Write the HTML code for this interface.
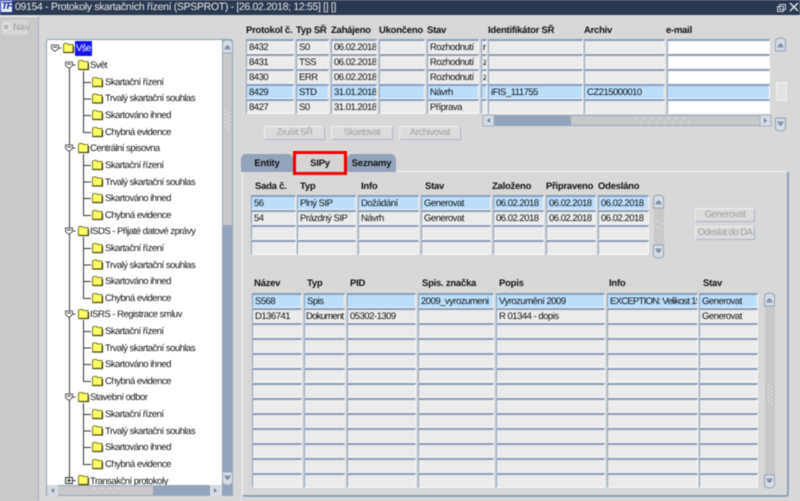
<!DOCTYPE html>
<html lang="cs"><head><meta charset="utf-8"><title>Protokoly skartačních řízení</title>
<style>
html,body{margin:0;padding:0}
body{width:800px;height:501px;position:relative;overflow:hidden;background:#d8d8d8;font:9.5px "Liberation Sans",sans-serif;color:#222;text-rendering:geometricPrecision;filter:blur(.45px)}
div,span{position:absolute;box-sizing:border-box;white-space:nowrap}
#title{left:0;top:0;width:800px;height:15px;background:#2a3950;color:#e8e8e8;font-size:10.5px;line-height:15px;padding-left:15px;letter-spacing:-.33px}
#logo{left:0;top:0;width:13px;height:13px;background:#e8ecfa;border:1px solid #2233aa;color:#1a2a9a;font:italic bold 10px/11px "Liberation Sans",sans-serif;text-align:center;letter-spacing:-1px}
#nav{left:0;top:16px;width:39px;height:485px;background:#c9c9c9;border-top:1px solid #eee;border-right:1px solid #a4b2c6}
#navb{left:2px;top:20px;width:26px;height:15px;background:#d6d6d6;color:#aaa;font-weight:bold;font-size:9.5px;line-height:15px;padding-left:11px;letter-spacing:-.2px}
#tree{left:46px;top:39px;width:187px;height:457px;background:#fff;border:1px solid #8fa0b8;border-radius:3px 3px 0 0}
.t{font-size:9.5px;line-height:12px;height:12px;color:#111;letter-spacing:-.5px;margin-top:1px}
.h{font-weight:bold;font-size:9.5px;line-height:13px;height:13px;color:#111;letter-spacing:-.25px}
.r{left:0;width:0;height:15px}
.c{top:0;height:15px;background:#ebebeb;border:1px solid #f6f6f6;border-top:2px solid #8b9db8;border-left:1px solid #8ea0ba;line-height:13px;padding-left:2px;overflow:hidden;font-size:9.5px;letter-spacing:-.5px;color:#111}
.s .c{background:#bbdefb}
.w{background:#fff}
.s .w{background:#bbdefb}
.a1{left:246px;width:48px}.a2{left:296px;width:33px}.a3{left:331px;width:46px}.a4{left:379px;width:46px}.a5{left:427px;width:52px}.a6{left:481px;width:6px;padding-left:1px}.a7{left:488px;width:95px}.a8{left:584px;width:81px}.a9{left:667px;width:103px}
.b1{left:251px;width:45px}.b2{left:297px;width:59px}.b3{left:358px;width:61px}.b4{left:421px;width:70px}.b5{left:493px;width:51px}.b6{left:546px;width:50px}.b7{left:598px;width:51px}
.d1{left:252px;width:50px}.d2{left:304px;width:41px}.d3{left:347px;width:69px}.d4{left:418px;width:76px}.d5{left:496px;width:109px}.d6{left:607px;width:91px}.d7{left:699px;width:59px}
.btn{height:14px;background:#dcdcdc;border:1px solid #eee;border-right-color:#a9b6c9;border-bottom-color:#a9b6c9;color:#a2a2a2;text-align:center;line-height:12px;font-size:9.5px;letter-spacing:-.4px}
.tab{top:154px;height:18px;background:#93a4ba;border-radius:5px 5px 0 0;text-align:center;font-weight:bold;font-size:9.5px;line-height:19px;color:#111;letter-spacing:-.2px}
#panel{left:242px;top:171px;width:547px;height:326px;border:1px solid #f2f2f2;border-right:2px solid #8ea0ba;border-bottom:2px solid #8ea0ba;border-radius:3px;background:#d8d8d8}
#red{left:293px;top:151px;width:54px;height:24px;border:3px solid #ee0000;background:#d4d4d4;text-align:center;font-weight:bold;font-size:9.5px;line-height:19px;color:#111;letter-spacing:-.2px}
#ov{position:absolute;left:0;top:0}
</style></head><body>
<div id="title">09154 - Protokoly skartačních řízení (SPSPROT) - [26.02.2018; 12:55] [] []</div>
<div id="logo">TF</div>
<div id="nav"></div>
<div id="navb">Nav</div>
<div id="tree"></div>

<span class="t" style="left:75px;top:40px;width:17px;height:15px;background:#1414f0;color:#fff;padding-left:1px;line-height:15px">Vše</span>
<span class="t" style="left:90px;top:59px">Svět</span>
<span class="t" style="left:105px;top:76px">Skartační řízení</span>
<span class="t" style="left:105px;top:92px">Trvalý skartační souhlas</span>
<span class="t" style="left:105px;top:109px">Skartováno ihned</span>
<span class="t" style="left:105px;top:126px">Chybná evidence</span>
<span class="t" style="left:90px;top:142px">Centrální spisovna</span>
<span class="t" style="left:105px;top:159px">Skartační řízení</span>
<span class="t" style="left:105px;top:176px">Trvalý skartační souhlas</span>
<span class="t" style="left:105px;top:192px">Skartováno ihned</span>
<span class="t" style="left:105px;top:209px">Chybná evidence</span>
<span class="t" style="left:90px;top:225px">ISDS - Přijaté datové zprávy</span>
<span class="t" style="left:105px;top:242px">Skartační řízení</span>
<span class="t" style="left:105px;top:259px">Trvalý skartační souhlas</span>
<span class="t" style="left:105px;top:275px">Skartováno ihned</span>
<span class="t" style="left:105px;top:292px">Chybná evidence</span>
<span class="t" style="left:90px;top:308px">ISRS - Registrace smluv</span>
<span class="t" style="left:105px;top:325px">Skartační řízení</span>
<span class="t" style="left:105px;top:342px">Trvalý skartační souhlas</span>
<span class="t" style="left:105px;top:358px">Skartováno ihned</span>
<span class="t" style="left:105px;top:375px">Chybná evidence</span>
<span class="t" style="left:90px;top:391px">Stavební odbor</span>
<span class="t" style="left:105px;top:408px">Skartační řízení</span>
<span class="t" style="left:105px;top:425px">Trvalý skartační souhlas</span>
<span class="t" style="left:105px;top:441px">Skartováno ihned</span>
<span class="t" style="left:105px;top:458px">Chybná evidence</span>
<div style="left:47px;top:474px;width:175px;height:11px;overflow:hidden"><span class="t" style="left:43px;top:1px">Transakční protokoly</span></div>

<span class="h" style="left:246px;top:24px">Protokol č.</span><span class="h" style="left:296px;top:24px">Typ SŘ</span><span class="h" style="left:331px;top:24px">Zahájeno</span><span class="h" style="left:379px;top:24px">Ukončeno</span><span class="h" style="left:427px;top:24px">Stav</span><span class="h" style="left:488px;top:24px">Identifikátor SŘ</span><span class="h" style="left:584px;top:24px">Archiv</span><span class="h" style="left:666px;top:24px">e-mail</span>

<div class="r" style="top:39px"><div class="c a1">8432</div><div class="c a2">S0</div><div class="c a3">06.02.2018</div><div class="c a4"></div><div class="c a5">Rozhodnutí</div><div class="c a6">r</div><div class="c a7"></div><div class="c a8"></div><div class="c a9 w"></div></div>
<div class="r" style="top:54px"><div class="c a1">8431</div><div class="c a2">TSS</div><div class="c a3">06.02.2018</div><div class="c a4"></div><div class="c a5">Rozhodnutí</div><div class="c a6">z</div><div class="c a7"></div><div class="c a8"></div><div class="c a9 w"></div></div>
<div class="r" style="top:69px"><div class="c a1">8430</div><div class="c a2">ERR</div><div class="c a3">06.02.2018</div><div class="c a4"></div><div class="c a5">Rozhodnutí</div><div class="c a6">z</div><div class="c a7"></div><div class="c a8"></div><div class="c a9 w"></div></div>
<div class="r s" style="top:84px"><div class="c a1">8429</div><div class="c a2">STD</div><div class="c a3">31.01.2018</div><div class="c a4"></div><div class="c a5">Návrh</div><div class="c a6"></div><div class="c a7">iFIS_111755</div><div class="c a8">CZ215000010</div><div class="c a9 w"></div></div>
<div class="r" style="top:99px"><div class="c a1">8427</div><div class="c a2">S0</div><div class="c a3">31.01.2018</div><div class="c a4"></div><div class="c a5">Příprava</div><div class="c a6"></div><div class="c a7"></div><div class="c a8"></div><div class="c a9 w"></div></div>

<div class="btn" style="left:264px;top:126px;width:61px">Zrušit SŘ</div>
<div class="btn" style="left:331px;top:126px;width:62px">Skartovat</div>
<div class="btn" style="left:399px;top:126px;width:62px">Archivovat</div>

<div id="panel"></div>
<div class="tab" style="left:241px;width:52px">Entity</div>
<div class="tab" style="left:347px;width:49px">Seznamy</div>
<div id="red">SIPy</div>

<span class="h" style="left:255px;top:180px">Sada č.</span><span class="h" style="left:300px;top:180px">Typ</span><span class="h" style="left:361px;top:180px">Info</span><span class="h" style="left:425px;top:180px">Stav</span><span class="h" style="left:492px;top:180px">Založeno</span><span class="h" style="left:546px;top:180px">Připraveno</span><span class="h" style="left:598px;top:180px">Odesláno</span>

<div class="r s" style="top:195px"><div class="c b1">56</div><div class="c b2">Plný SIP</div><div class="c b3">Dožádání</div><div class="c b4">Generovat</div><div class="c b5">06.02.2018</div><div class="c b6">06.02.2018</div><div class="c b7">06.02.2018</div></div>
<div class="r" style="top:210px"><div class="c b1">54</div><div class="c b2">Prázdný SIP</div><div class="c b3">Návrh</div><div class="c b4">Generovat</div><div class="c b5">06.02.2018</div><div class="c b6">06.02.2018</div><div class="c b7">06.02.2018</div></div>
<div class="r" style="top:225px"><div class="c b1"></div><div class="c b2"></div><div class="c b3"></div><div class="c b4"></div><div class="c b5"></div><div class="c b6"></div><div class="c b7"></div></div>
<div class="r" style="top:240px"><div class="c b1"></div><div class="c b2"></div><div class="c b3"></div><div class="c b4"></div><div class="c b5"></div><div class="c b6"></div><div class="c b7"></div></div>

<div class="btn" style="left:695px;top:208px;width:60px">Generovat</div>
<div class="btn" style="left:695px;top:226px;width:60px;letter-spacing:-.55px">Odeslat do DA</div>

<span class="h" style="left:254px;top:277px">Název</span><span class="h" style="left:307px;top:277px">Typ</span><span class="h" style="left:350px;top:277px">PID</span><span class="h" style="left:422px;top:277px">Spis. značka</span><span class="h" style="left:499px;top:277px">Popis</span><span class="h" style="left:609px;top:277px">Info</span><span class="h" style="left:703px;top:277px">Stav</span>

<div class="r s" style="top:293px"><div class="c d1">S568</div><div class="c d2">Spis</div><div class="c d3"></div><div class="c d4">2009_vyrozumeni</div><div class="c d5">Vyrozumění 2009</div><div class="c d6" style="letter-spacing:-.72px">EXCEPTION: Velikost 15</div><div class="c d7">Generovat</div></div>
<div class="r" style="top:308px"><div class="c d1">D136741</div><div class="c d2" style="letter-spacing:-.75px;padding-left:1px">Dokument</div><div class="c d3">05302-1309</div><div class="c d4"></div><div class="c d5">R 01344 - dopis</div><div class="c d6"></div><div class="c d7">Generovat</div></div>
<div class="r" style="top:323px"><div class="c d1"></div><div class="c d2"></div><div class="c d3"></div><div class="c d4"></div><div class="c d5"></div><div class="c d6"></div><div class="c d7"></div></div>
<div class="r" style="top:338px"><div class="c d1"></div><div class="c d2"></div><div class="c d3"></div><div class="c d4"></div><div class="c d5"></div><div class="c d6"></div><div class="c d7"></div></div>
<div class="r" style="top:353px"><div class="c d1"></div><div class="c d2"></div><div class="c d3"></div><div class="c d4"></div><div class="c d5"></div><div class="c d6"></div><div class="c d7"></div></div>
<div class="r" style="top:368px"><div class="c d1"></div><div class="c d2"></div><div class="c d3"></div><div class="c d4"></div><div class="c d5"></div><div class="c d6"></div><div class="c d7"></div></div>
<div class="r" style="top:383px"><div class="c d1"></div><div class="c d2"></div><div class="c d3"></div><div class="c d4"></div><div class="c d5"></div><div class="c d6"></div><div class="c d7"></div></div>
<div class="r" style="top:398px"><div class="c d1"></div><div class="c d2"></div><div class="c d3"></div><div class="c d4"></div><div class="c d5"></div><div class="c d6"></div><div class="c d7"></div></div>
<div class="r" style="top:413px"><div class="c d1"></div><div class="c d2"></div><div class="c d3"></div><div class="c d4"></div><div class="c d5"></div><div class="c d6"></div><div class="c d7"></div></div>
<div class="r" style="top:428px"><div class="c d1"></div><div class="c d2"></div><div class="c d3"></div><div class="c d4"></div><div class="c d5"></div><div class="c d6"></div><div class="c d7"></div></div>
<div class="r" style="top:443px"><div class="c d1"></div><div class="c d2"></div><div class="c d3"></div><div class="c d4"></div><div class="c d5"></div><div class="c d6"></div><div class="c d7"></div></div>
<div class="r" style="top:458px"><div class="c d1"></div><div class="c d2"></div><div class="c d3"></div><div class="c d4"></div><div class="c d5"></div><div class="c d6"></div><div class="c d7"></div></div>
<div class="r" style="top:473px"><div class="c d1"></div><div class="c d2"></div><div class="c d3"></div><div class="c d4"></div><div class="c d5"></div><div class="c d6"></div><div class="c d7"></div></div>

<svg id="ov" width="800" height="501" viewBox="0 0 800 501" xmlns="http://www.w3.org/2000/svg">
<defs>
<g id="f"><path d="M.5 9.500V1.500l1-1h3l1 1h4.500v8z" fill="#ffff66" stroke="#77772a"/><path d="M1 9.500h9.500V3" fill="none" stroke="#44440f" stroke-width="1.200"/></g>
<g id="n"><path d="M-3.500-3h7v3.500l-3.500 3-3.500-3z" fill="#fff" stroke="#555"/><path d="M-2-1h4" stroke="#333"/><path d="M3.500 0h3" stroke="#444"/></g>
<g id="l"><path d="M83.500 0v50.500" stroke="#333" fill="none"/><path d="M83 .5h8M83 17h8M83 33.500h8M83 50.500h8" stroke="#333" fill="none"/><use href="#f" x="92" y="-5"/><use href="#f" x="92" y="11.500"/><use href="#f" x="92" y="28"/><use href="#f" x="92" y="45"/></g>
<g id="ub"><path d="M.5 13V3a5 3 0 0 1 10 0v10z" fill="#d6dbe3" stroke="#94a5bb"/><path d="M2.500 8l3-3 3 3z" fill="#6f8199"/><path d="M2.500 9h6" stroke="#6f8199"/></g>
<g id="db"><path d="M.5 0v10a5 3 0 0 0 10 0V0z" fill="#d6dbe3" stroke="#94a5bb"/><path d="M2.500 5l3 3 3-3z" fill="#6f8199"/><path d="M2.500 4h6" stroke="#6f8199"/></g>
<g id="dots" fill="#fff"><rect x="0" y="0" width="1" height="1"/><rect x="3" y="2" width="1" height="1"/><rect x="0" y="4" width="1" height="1"/><rect x="3" y="6" width="1" height="1"/><rect x="0" y="8" width="1" height="1"/><rect x="3" y="10" width="1" height="1"/><rect x="0" y="12" width="1" height="1"/><rect x="3" y="14" width="1" height="1"/><rect x="0" y="16" width="1" height="1"/><rect x="3" y="18" width="1" height="1"/></g>
</defs>

<path d="M779.500 4.500h6v5h-6zM777.500 6.500h6v5h-6z" fill="#2a3950" stroke="#c8d0dc" stroke-width="1"/>
<path d="M790 3l8 8M798 3l-8 8" stroke="#e4e8ee" stroke-width="1.400"/>

<circle cx="6" cy="27" r="3.500" fill="#bbb" stroke="#e8e8e8" stroke-width="1.500"/>

<rect x="222" y="40" width="11" height="445" fill="#94a5bb"/>
<rect x="223" y="52" width="9" height="173" fill="#c8c8c8"/>
<use href="#ub" x="222" y="40"/>
<use href="#db" x="222" y="472"/>
<use href="#dots" x="225" y="110"/>
<rect x="47" y="485" width="186" height="11" fill="#94a5bb"/>
<rect x="58" y="486" width="95" height="9" fill="#c8c8c8"/>
<rect x="47" y="485" width="11" height="11" fill="#d6dbe3"/>
<path d="M54 488v5l-3-2.500z" fill="#6f8199"/>
<rect x="210" y="485" width="12" height="11" fill="#d6dbe3"/>
<path d="M214 488v5l3-2.500z" fill="#6f8199"/>
<g fill="#fff"><rect x="94" y="488" width="1" height="1"/><rect x="98" y="492" width="1" height="1"/><rect x="102" y="488" width="1" height="1"/><rect x="106" y="492" width="1" height="1"/><rect x="110" y="488" width="1" height="1"/><rect x="114" y="492" width="1" height="1"/><rect x="118" y="488" width="1" height="1"/></g>

<path d="M69.500 66V478" stroke="#555" stroke-width="1.200" fill="none"/>
<use href="#n" x="55" y="48"/><use href="#f" x="63" y="43"/>
<use href="#n" x="69" y="65"/><use href="#f" x="78" y="60"/>
<use href="#n" x="69" y="148"/><use href="#f" x="78" y="143"/>
<use href="#n" x="69" y="231"/><use href="#f" x="78" y="226"/>
<use href="#n" x="69" y="314"/><use href="#f" x="78" y="309"/>
<use href="#n" x="69" y="397"/><use href="#f" x="78" y="392"/>
<path d="M65.500 477.500h7v6h-7z" fill="#fff" stroke="#333"/><path d="M67 480.500h4M69 478.500v4M72.500 480.500h3" stroke="#222"/>
<use href="#f" x="78" y="475"/>
<use href="#l" y="82"/><use href="#l" y="165"/><use href="#l" y="248"/><use href="#l" y="331"/><use href="#l" y="414"/>
<path d="M83.500 71V82M83.500 154V165M83.500 237V248M83.500 320V331M83.500 403V414" stroke="#333"/>

<rect x="483" y="115" width="288" height="11" fill="#94a5bb" rx="2"/>
<rect x="571" y="116" width="189" height="9" fill="#c8c8c8"/>
<rect x="483" y="115" width="11" height="11" fill="#d6dbe3" stroke="#a4b2c6"/>
<path d="M490 118v5l-3-2.500z" fill="#6f8199"/>
<rect x="760" y="115" width="11" height="11" fill="#d6dbe3" stroke="#a4b2c6"/>
<path d="M764 118v5l3-2.500z" fill="#6f8199"/>
<g fill="#fff"><rect x="636" y="118" width="1" height="1"/><rect x="640" y="122" width="1" height="1"/><rect x="644" y="118" width="1" height="1"/><rect x="648" y="122" width="1" height="1"/><rect x="652" y="118" width="1" height="1"/><rect x="656" y="122" width="1" height="1"/><rect x="660" y="118" width="1" height="1"/><rect x="664" y="122" width="1" height="1"/><rect x="668" y="118" width="1" height="1"/><rect x="672" y="122" width="1" height="1"/><rect x="676" y="118" width="1" height="1"/><rect x="680" y="122" width="1" height="1"/><rect x="684" y="118" width="1" height="1"/><rect x="688" y="122" width="1" height="1"/></g>
<rect x="777" y="50" width="9" height="68" fill="#d8d8d8"/>
<use href="#ub" x="775" y="38"/>
<rect x="776.500" y="82.500" width="10" height="18" fill="#e2e2e2" stroke="#f0f0f0"/>
<rect x="780" y="91" width="1" height="1" fill="#fff"/><rect x="783" y="89" width="1" height="1" fill="#fff"/>
<use href="#db" x="775" y="118"/>

<rect x="654" y="206" width="10" height="39" fill="#c8c8c8"/>
<use href="#ub" x="653" y="195"/>
<use href="#db" x="653" y="245"/>
<rect x="657" y="221" width="1" height="1" fill="#fff"/><rect x="661" y="223" width="1" height="1" fill="#fff"/><rect x="657" y="227" width="1" height="1" fill="#fff"/><rect x="661" y="229" width="1" height="1" fill="#fff"/>

<rect x="765" y="305" width="10" height="170" fill="#c8c8c8"/>
<use href="#ub" x="764" y="293"/>
<use href="#db" x="764" y="475"/>
<use href="#dots" x="768" y="385"/>
</svg>
</body></html>
